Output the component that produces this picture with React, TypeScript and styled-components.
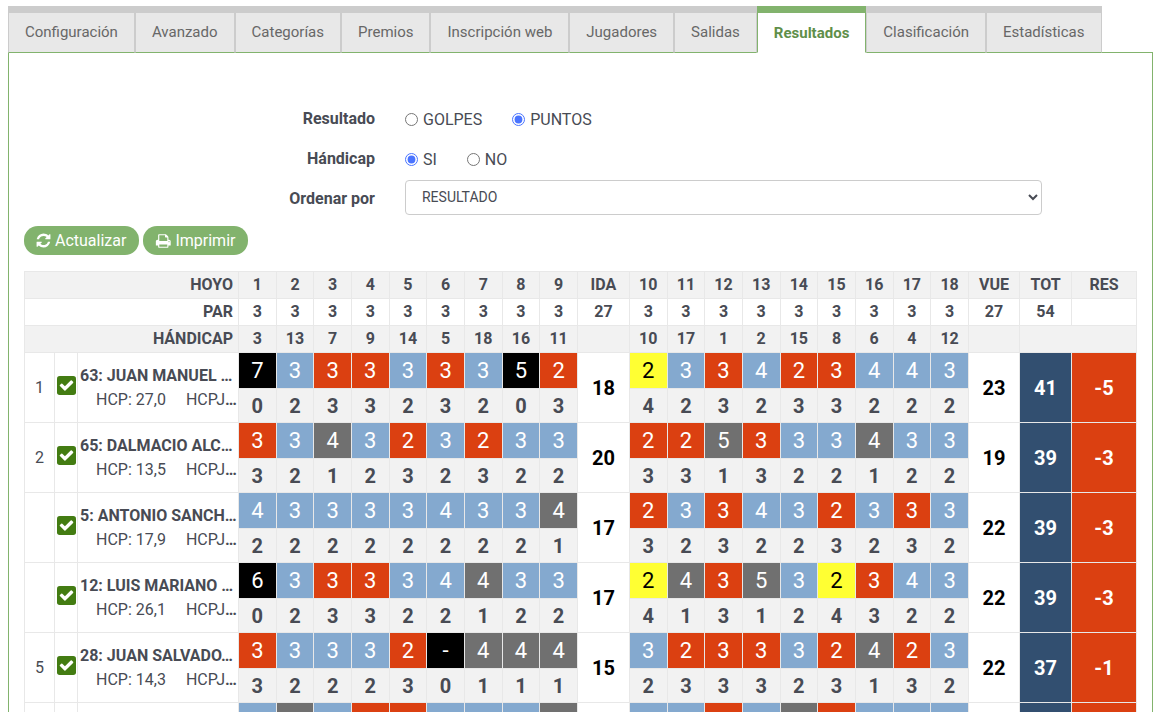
import React from 'react';
import styled, { createGlobalStyle, css } from 'styled-components';

const GlobalStyle = createGlobalStyle`
  *, *::before, *::after { box-sizing: border-box; }
  body {
    margin: 0;
    background: #fff;
    color: #484b54;
    font-family: Roboto, "Liberation Sans", sans-serif;
    font-size: 16px;
    line-height: 24px;
  }
`;

const Page = styled.main`
  height: 100vh;
  padding: 6px 8px 0;
  overflow: hidden;
`;

const Tabs = styled.nav`
  display: flex;
  position: relative;
  margin-bottom: -1px;
`;

const Tab = styled.a<{ $active?: boolean }>`
  height: 47px;
  padding: 8px 16px 0;
  border: 1px solid #ccc;
  border-top: 7px solid #ccc;
  border-bottom-color: #82b36d;
  background: #e8e8e8;
  color: #676767;
  font-size: 15px;
  line-height: 22px;
  text-decoration: none;
  white-space: nowrap;
  ${({ $active }) =>
    $active &&
    css`
      padding-top: 9px;
      border-color: #82b36d;
      border-bottom-color: #fff;
      background: #fff;
      color: #5f8f4a;
      font-weight: 700;
    `}
`;

const Panel = styled.section`
  padding: 46px 15px 0;
  border: 1px solid #82b36d;
`;

const Filters = styled.form`
  margin: 0 -15px;
`;

const Field = styled.div`
  display: flex;
  height: 40px;
  align-items: center;
`;

const labelStyle = css`
  flex: 0 0 33.3333%;
  padding-right: 15px;
  font-weight: 700;
  text-align: right;
`;
const FieldLabel = styled.label`
  ${labelStyle}
`;
const GroupLabel = styled.span`
  ${labelStyle}
`;

const Control = styled.div`
  flex: 0 0 58.3333%;
  padding: 0 15px 4px;
`;

const Choices = styled(Control)`
  display: flex;
  gap: 30px;
  padding: 2px 15px 0;
`;

const Choice = styled.label`
  display: flex;
  align-items: center;
  gap: 5px;
`;

const Radio = styled.input`
  width: 13px;
  height: 13px;
  margin: 0 0 2px;
  accent-color: #4a74ff;
`;

const Select = styled.select`
  display: block;
  width: 100%;
  height: 35px;
  padding: 6px 0 6px 12px;
  border: 1px solid #ccc;
  border-radius: 4px;
  background: #fff;
  color: #484b54;
  font-family: inherit;
  font-size: 14px;
`;

const Actions = styled.div`
  display: flex;
  gap: 4px;
  margin: 7px 0 16px;
`;

const Button = styled.button`
  display: flex;
  height: 29px;
  align-items: center;
  gap: 4px;
  padding: 0 13px 0 12px;
  border: 0;
  border-radius: 14px;
  background: #82b36d;
  color: #fff;
  font-family: inherit;
  font-size: 16px;
`;

const Scores = styled.table`
  width: 100%;
  border-collapse: collapse;
  table-layout: fixed;
`;

const Col = styled.col<{ $width?: number }>`
  ${({ $width }) => $width && `width: ${$width}px;`}
`;

const HeadRow = styled.tr<{ $shaded?: boolean }>`
  height: 27px;
  background: ${({ $shaded }) => ($shaded ? '#f2f2f2' : '#fff')};
`;

const HeadCell = styled.th<{ $right?: boolean }>`
  padding: 0 ${({ $right }) => ($right ? 5 : 0)}px 0 0;
  border: 1px solid #e8e8e8;
  font-weight: 700;
  text-align: ${({ $right }) => ($right ? 'right' : 'center')};
`;

const ScoreRow = styled.tr`
  height: 36px;
`;
const PointsRow = styled.tr`
  height: 34px;
  background: #f2f2f2;
`;

const Cell = styled.td`
  padding: 0;
  border: 1px solid #e8e8e8;
  background: #fff;
  text-align: center;
`;

const PlayerCell = styled(Cell)`
  padding: 0 0 0 2px;
  text-align: left;
  font-weight: 700;
  white-space: nowrap;
`;

const PlayerLine = styled.div`
  overflow: hidden;
  text-overflow: ellipsis;
`;

const Handicap = styled.span<{ $start?: boolean }>`
  margin-left: ${({ $start }) => ($start ? 16 : 20)}px;
  font-weight: 400;
`;

const tones = {
  b: ['#84a9cf', '#fff'],
  r: ['#db4011', '#fff'],
  g: ['#707070', '#fff'],
  k: ['#000', '#fff'],
  y: ['#ffff33', '#000'],
} as const;
type Tone = keyof typeof tones;

const StrokeCell = styled(Cell)<{ $tone: Tone }>`
  background: ${({ $tone }) => tones[$tone][0]};
  color: ${({ $tone }) => tones[$tone][1]};
  font-size: 22px;
`;

const PointsCell = styled(Cell)`
  background: transparent;
  font-size: 20px;
  font-weight: 700;
`;

const TotalCell = styled(Cell)<{ $bg?: string }>`
  background: ${({ $bg }) => $bg ?? '#fff'};
  color: ${({ $bg }) => ($bg ? '#fff' : '#000')};
  font-size: 20px;
  font-weight: 700;
`;

const CheckBox = styled.label`
  display: grid;
  justify-content: center;
  margin-bottom: 4px;

  > * {
    grid-area: 1 / 1;
  }
  input {
    width: 19px;
    height: 19px;
    margin: 0;
    opacity: 0;
  }
`;

const tabNames = [
  'Configuración', 'Avanzado', 'Categorías', 'Premios', 'Inscripción web',
  'Jugadores', 'Salidas', 'Resultados', 'Clasificación', 'Estadísticas',
];

const pars = Array(9).fill('3').join(' ');
const header = [
  { name: 'HOYO', out: '1 2 3 4 5 6 7 8 9', back: '10 11 12 13 14 15 16 17 18', ida: 'IDA', vue: 'VUE', tot: 'TOT', res: 'RES' },
  { name: 'PAR', out: pars, back: pars, ida: '27', vue: '27', tot: '54', res: '' },
];
const handicaps = { out: '3 13 7 9 14 5 18 16 11', back: '10 17 1 2 15 8 6 4 12' };

interface Player {
  rank: string;
  name: string;
  hcp: string;
  strokes: string;
  tones: string;
  points: string;
  ida: string;
  vue: string;
  tot: string;
  res: string;
}

const players: Player[] = [
  { rank: '1', name: '63: JUAN MANUEL …', hcp: '27,0', strokes: '733333352233423443', tones: 'kbrrbrbkrybrbrrbbb', points: '023323203423233222', ida: '18', vue: '23', tot: '41', res: '-5' },
  { rank: '2', name: '65: DALMACIO ALC…', hcp: '13,5', strokes: '334323233225333433', tones: 'rbgbrbrbbrrgrbbgbb', points: '321232322331322122', ida: '20', vue: '19', tot: '39', res: '-3' },
  { rank: '', name: '5: ANTONIO SANCH…', hcp: '17,9', strokes: '433334334233432333', tones: 'bbbbbbbbgrbrbbrbrb', points: '222222221323223232', ida: '17', vue: '22', tot: '39', res: '-3' },
  { rank: '', name: '12: LUIS MARIANO …', hcp: '26,1', strokes: '633334433243532343', tones: 'kbrrbbgbbygrgbyrbb', points: '023322122413124322', ida: '17', vue: '22', tot: '39', res: '-3' },
  { rank: '5', name: '28: JUAN SALVADO…', hcp: '14,3', strokes: '33332-444323332423', tones: 'rbbbrkgggbrrrbrgrb', points: '322230111233323132', ida: '15', vue: '22', tot: '37', res: '-1' },
  { rank: '', name: '', hcp: '', strokes: '', tones: 'bgbrrbbbgbbrbgrbbb', points: '', ida: '', vue: '', tot: '', res: '' },
];

const front = [0, 1, 2, 3, 4, 5, 6, 7, 8];
const back = front.map((n) => n + 9);

const RefreshIcon = () => (
  <svg width="15" height="15" viewBox="64 64 1664 1664" fill="currentColor" aria-hidden="true">
    <path d="M1639 1056q0 5-1 7-64 268-268 434.5t-478 166.5q-146 0-282.5-55t-243.5-157l-129 129q-19 19-45 19t-45-19-19-45v-448q0-26 19-45t45-19h448q26 0 45 19t19 45-19 45l-137 137q71 66 161 102t187 36q134 0 250-65t186-179q11-17 53-117 8-23 30-23h192q13 0 22.5 9.5t9.5 22.5zm25-800v448q0 26-19 45t-45 19h-448q-26 0-45-19t-19-45 19-45l138-138q-148-137-349-137-134 0-250 65t-186 179q-11 17-53 117-8 23-30 23h-199q-13 0-22.5-9.5t-9.5-22.5v-7q65-268 270-434.5t480-166.5q146 0 284 55.5t245 156.5l130-129q19-19 45-19t45 19 19 45z" />
  </svg>
);

const PrintIcon = () => (
  <svg width="16" height="16" viewBox="0 0 1728 1792" fill="currentColor" aria-hidden="true">
    <path d="M448 1536h896v-256h-896v256zm0-640h896v-384h-160q-40 0-68-28t-28-68v-160h-640v640zm1152 64q0-26-19-45t-45-19-45 19-19 45 19 45 45 19 45-19 19-45zm128 0v416q0 13-9.5 22.5t-22.5 9.5h-224v160q0 40-28 68t-68 28h-960q-40 0-68-28t-28-68v-160h-224q-13 0-22.5-9.5t-9.5-22.5v-416q0-79 56.5-135.5t135.5-56.5h64v-544q0-40 28-68t68-28h672q40 0 88 20t76 48l152 152q28 28 48 76t20 88v256h64q79 0 135.5 56.5t56.5 135.5z" />
  </svg>
);

const CheckIcon = () => (
  <svg width="19" height="19" viewBox="128 128 1536 1536" aria-hidden="true">
    <rect x="128" y="128" width="1536" height="1536" rx="220" fill="#437c12" />
    <path
      fill="#fff"
      d="M813 1299l614-614q19-19 19-45t-19-45l-102-102q-19-19-45-19t-45 19l-467 467-211-211q-19-19-45-19t-45 19l-102 102q-19 19-19 45t19 45l358 358q19 19 45 19t45-19z"
    />
  </svg>
);

function HoleHeads({ values }: { values: string }) {
  return <>{values.split(' ').map((v, i) => <HeadCell key={i}>{v}</HeadCell>)}</>;
}

function PlayerRows({ p }: { p: Player }) {
  const stroke = (i: number) => (
    <StrokeCell key={i} $tone={p.tones[i] as Tone}>{p.strokes[i]}</StrokeCell>
  );
  const point = (i: number) => <PointsCell key={i}>{p.points[i]}</PointsCell>;
  return (
    <>
      <ScoreRow>
        <Cell rowSpan={2}>{p.rank}</Cell>
        <Cell rowSpan={2}>
          {p.name && (
            <CheckBox>
              <input type="checkbox" defaultChecked aria-label={p.name} />
              <CheckIcon />
            </CheckBox>
          )}
        </Cell>
        <PlayerCell rowSpan={2}>
          {p.name && (
            <>
              <PlayerLine>{p.name}</PlayerLine>
              <PlayerLine>
                <Handicap $start>HCP: {p.hcp}</Handicap>
                <Handicap>HCPJ</Handicap>…
              </PlayerLine>
            </>
          )}
        </PlayerCell>
        {front.map(stroke)}
        <TotalCell rowSpan={2}>{p.ida}</TotalCell>
        {back.map(stroke)}
        <TotalCell rowSpan={2}>{p.vue}</TotalCell>
        <TotalCell rowSpan={2} $bg="#324f70">{p.tot}</TotalCell>
        <TotalCell rowSpan={2} $bg="#db4011">{p.res}</TotalCell>
      </ScoreRow>
      <PointsRow>
        {front.map(point)}
        {back.map(point)}
      </PointsRow>
    </>
  );
}

export default function App() {
  return (
    <Page>
      <GlobalStyle />
      <Tabs>
        {tabNames.map((t) => (
          <Tab key={t} href="#" $active={t === 'Resultados'}>{t}</Tab>
        ))}
      </Tabs>
      <Panel>
        <Filters>
          <Field role="radiogroup" aria-labelledby="resultado">
            <GroupLabel id="resultado">Resultado</GroupLabel>
            <Choices>
              <Choice><Radio type="radio" name="resultado" />GOLPES</Choice>
              <Choice><Radio type="radio" name="resultado" defaultChecked />PUNTOS</Choice>
            </Choices>
          </Field>
          <Field role="radiogroup" aria-labelledby="handicap">
            <GroupLabel id="handicap">Hándicap</GroupLabel>
            <Choices>
              <Choice><Radio type="radio" name="handicap" defaultChecked />SI</Choice>
              <Choice><Radio type="radio" name="handicap" />NO</Choice>
            </Choices>
          </Field>
          <Field>
            <FieldLabel htmlFor="orden">Ordenar por</FieldLabel>
            <Control>
              <Select id="orden"><option>RESULTADO</option></Select>
            </Control>
          </Field>
        </Filters>
        <Actions>
          <Button type="button"><RefreshIcon />Actualizar</Button>
          <Button type="button"><PrintIcon />Imprimir</Button>
        </Actions>
        <Scores>
          <colgroup>
            <Col $width={30} />
            <Col $width={23} />
            <Col $width={161} />
            {front.map((i) => <Col key={i} />)}
            <Col $width={52} />
            {back.map((i) => <Col key={i} />)}
            <Col $width={51} />
            <Col $width={52} />
            <Col $width={65} />
          </colgroup>
          <thead>
            {header.map((h, i) => (
              <HeadRow key={h.name} $shaded={i === 0}>
                <HeadCell colSpan={3} $right>{h.name}</HeadCell>
                <HoleHeads values={h.out} />
                <HeadCell>{h.ida}</HeadCell>
                <HoleHeads values={h.back} />
                <HeadCell>{h.vue}</HeadCell>
                <HeadCell>{h.tot}</HeadCell>
                <HeadCell>{h.res}</HeadCell>
              </HeadRow>
            ))}
            <HeadRow $shaded>
              <HeadCell colSpan={3} $right>HÁNDICAP</HeadCell>
              <HoleHeads values={handicaps.out} />
              <HeadCell />
              <HoleHeads values={handicaps.back} />
              <HeadCell />
              <HeadCell colSpan={2} />
            </HeadRow>
          </thead>
          <tbody>
            {players.map((p, i) => <PlayerRows key={i} p={p} />)}
          </tbody>
        </Scores>
      </Panel>
    </Page>
  );
}
